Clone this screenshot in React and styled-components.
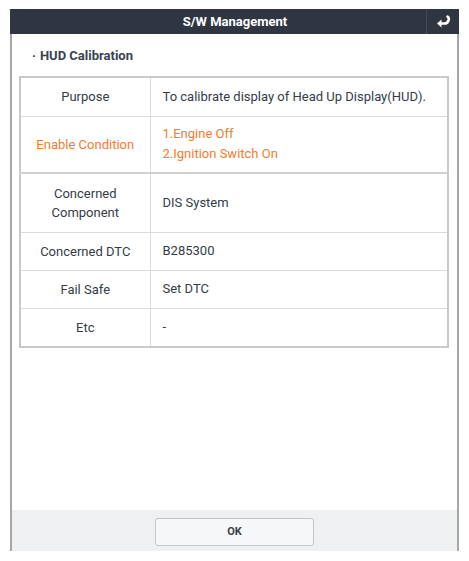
import React from "react";
import styled, { createGlobalStyle } from "styled-components";

const Global = createGlobalStyle`
  html, body { margin: 0; padding: 0; background: #fff; }
  body { font-family: Roboto, "Noto Sans", "Liberation Sans", sans-serif; }
`;

const Frame = styled.div`
  margin: 9px 0 0 10px;
  width: 449px;
  height: 542px;
  display: flex;
  flex-direction: column;
  box-sizing: border-box;
`;

const Header = styled.div`
  height: 25px;
  background: #2f3541;
  display: flex;
  align-items: stretch;
`;

const HeaderTitle = styled.div`
  flex: 1;
  display: flex;
  align-items: center;
  justify-content: center;
  color: #fff;
  font-weight: 700;
  font-size: 13px;
  padding-left: 34px;
`;

const BackBtn = styled.div`
  width: 32px;
  border-left: 1px solid #454b57;
  display: flex;
  align-items: center;
  justify-content: center;
`;

const Body = styled.div`
  flex: 1;
  border-left: 2px solid #a6a6a6;
  border-right: 2px solid #a6a6a6;
  display: flex;
  flex-direction: column;
`;

const Content = styled.div`
  flex: 1;
  padding: 0 8px 0 7px;
`;

const SectionTitle = styled.div`
  height: 42px;
  display: flex;
  align-items: center;
  padding-left: 13px;
  padding-top: 2px;
  padding-bottom: 1px;
  box-sizing: border-box;
  color: #3a4150;
  font-weight: 700;
  font-size: 13px;
  gap: 4px;
`;

const Table = styled.table`
  width: 430px;
  border-collapse: collapse;
  border: 2px solid #c9c9c9;
  table-layout: fixed;
  font-size: 13px;
  color: #343b47;
`;

const Row = styled.tr`
  height: ${(p) => p.$h}px;
  border-bottom: 1px solid #dadada;
  &:nth-child(2) { border-bottom: 2px solid #d0d0d0; }
`;

const Label = styled.td`
  text-align: center;
  border-right: 1px solid #dadada;
  line-height: 19px;
  padding: 0 4px;
  color: ${(p) => (p.$orange ? "#f47b2e" : "#343b47")};
`;

const Value = styled.td`
  padding: 0 6px 0 12px;
  line-height: 20px;
  color: ${(p) => (p.$orange ? "#f47b2e" : "#343b47")};
`;

const Footer = styled.div`
  height: 41px;
  background: #eff0f2;
  display: flex;
  align-items: center;
  justify-content: center;
`;

const OkButton = styled.button`
  width: 159px;
  height: 28px;
  background: #f6f7f8;
  border: 1px solid #c4c5c8;
  border-radius: 3px;
  font-family: inherit;
  font-weight: 700;
  font-size: 11px;
  color: #3a3f4a;
  margin-top: 2px;
`;

const rows = [
  { label: "Purpose", value: ["To calibrate display of Head Up Display(HUD)."], h: 39 },
  { label: "Enable Condition", value: ["1.Engine Off", "2.Ignition Switch On"], h: 57, orange: true },
  { label: "Concerned Component", value: ["DIS System"], h: 59, wrap: true },
  { label: "Concerned DTC", value: ["B285300"], h: 38 },
  { label: "Fail Safe", value: ["Set DTC"], h: 38 },
  { label: "Etc", value: ["-"], h: 39 },
];

export default function App() {
  return (
    <>
      <Global />
      <Frame>
        <Header>
          <HeaderTitle>S/W Management</HeaderTitle>
          <BackBtn>
            <svg width="15" height="13" viewBox="0 0 15 13">
              <path d="M11.5 1.5 Q13.5 3 12.5 5.5 Q11.5 8.5 8.5 8.5 H4.5" fill="none" stroke="#fff" strokeWidth="2.6" strokeLinecap="round" />
              <path d="M1 8.5 L5.5 4.5 L5.5 12.5 Z" fill="#fff" />
            </svg>
          </BackBtn>
        </Header>
        <Body>
          <Content>
            <SectionTitle>
              <span>·</span>
              <span>HUD Calibration</span>
            </SectionTitle>
            <Table>
              <colgroup>
                <col style={{ width: 130 }} />
                <col />
              </colgroup>
              <tbody>
                {rows.map((r) => (
                  <Row key={r.label} $h={r.h}>
                    <Label $orange={r.orange}>
                      {r.wrap ? (
                        <>
                          Concerned
                          <br />
                          Component
                        </>
                      ) : (
                        r.label
                      )}
                    </Label>
                    <Value $orange={r.orange}>
                      {r.value.map((v, i) => (
                        <div key={i}>{v}</div>
                      ))}
                    </Value>
                  </Row>
                ))}
              </tbody>
            </Table>
          </Content>
          <Footer>
            <OkButton>OK</OkButton>
          </Footer>
        </Body>
      </Frame>
    </>
  );
}
